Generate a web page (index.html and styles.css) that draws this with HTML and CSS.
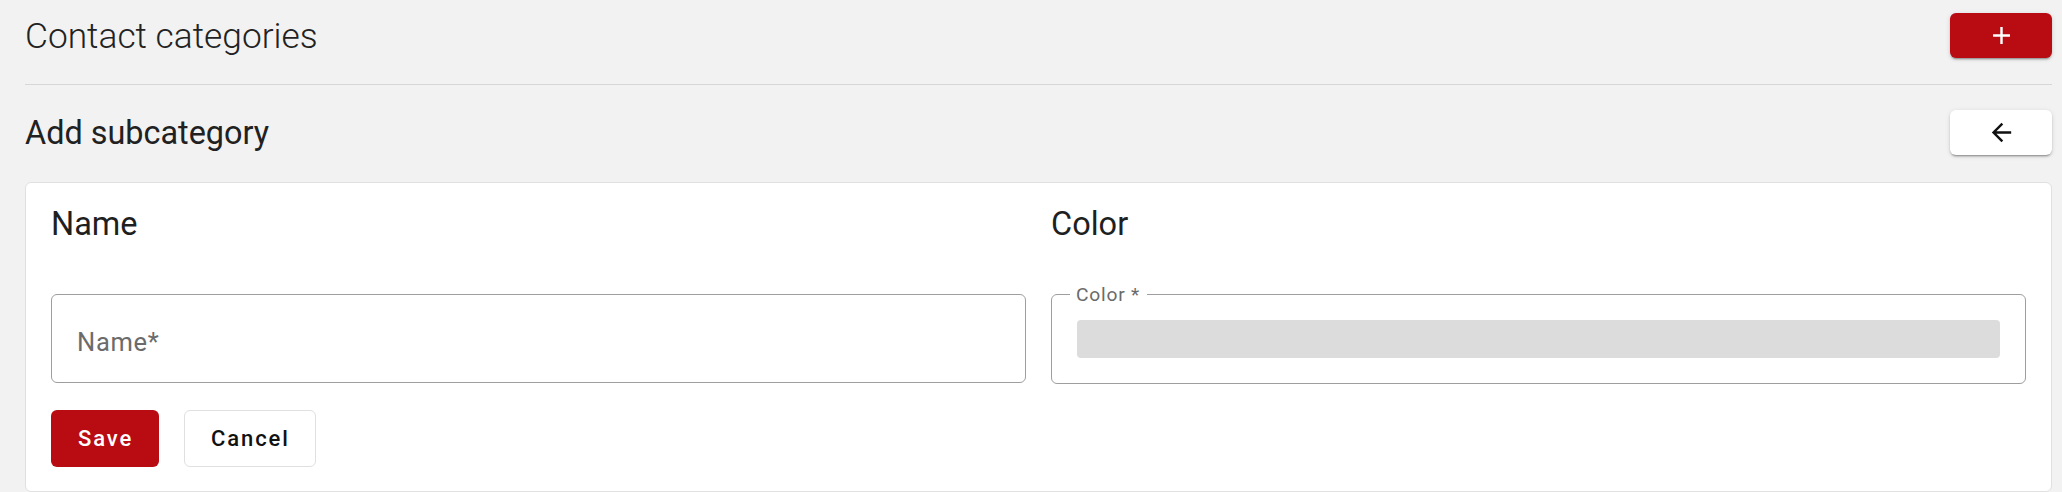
FILE: index.html
```html
<!DOCTYPE html>
<html lang="en">
<head>
<meta charset="utf-8">
<title>Contact categories</title>
<link rel="stylesheet" href="styles.css">
</head>
<body>
<div class="page">
  <header class="page-head">
    <h1 class="page-title">Contact categories</h1>
    <button class="btn-raised btn-red" type="button" aria-label="Add">
      <svg class="icon" viewBox="0 0 24 24" width="29" height="29"><path fill="#fff" d="M19 13h-6v6h-2v-6H5v-2h6V5h2v6h6v2z"/></svg>
    </button>
  </header>
  <div class="sub-head">
    <h2 class="sub-title">Add subcategory</h2>
    <button class="btn-raised btn-white" type="button" aria-label="Back">
      <svg class="icon" viewBox="0 0 24 24" width="29" height="29"><path fill="#111" d="M20 11H7.83l5.59-5.59L12 4l-8 8 8 8 1.41-1.41L7.83 13H20v-2z"/></svg>
    </button>
  </div>
  <section class="card">
    <div class="fields">
      <div class="col">
        <h3 class="field-title">Name</h3>
        <input class="text-input" type="text" placeholder="Name*">
      </div>
      <div class="col">
        <h3 class="field-title">Color</h3>
        <fieldset class="outline">
          <legend class="outline-label">Color *</legend>
          <div class="color-bar"></div>
        </fieldset>
      </div>
    </div>
    <div class="actions">
      <button class="btn btn-save" type="button">Save</button>
      <button class="btn btn-cancel" type="button">Cancel</button>
    </div>
  </section>
</div>
</body>
</html>
```

FILE: styles.css
```css
* { box-sizing: border-box; }

html, body {
  margin: 0;
  padding: 0;
  background: #f2f2f2;
  font-family: Roboto, "Liberation Sans", Arial, sans-serif;
  color: #212121;
}

.page {
  padding: 0 10px 0 25px;
}

.page-head {
  display: flex;
  align-items: center;
  justify-content: space-between;
  padding: 13px 0 26px;
  border-bottom: 1px solid #d7d7d7;
}

.page-title {
  margin: 0;
  font-size: 35.3px;
  font-weight: 300;
  line-height: 40px;
  color: #222;
}

.sub-head {
  display: flex;
  align-items: center;
  justify-content: space-between;
  padding: 25px 0 27px;
}

.sub-title {
  margin: 0;
  font-size: 32.4px;
  font-weight: 400;
  line-height: 40px;
  color: #212121;
}

.btn-raised {
  width: 102px;
  height: 45px;
  border: 0;
  border-radius: 6px;
  display: flex;
  align-items: center;
  justify-content: center;
  padding: 0;
  box-shadow: 0 3px 1px -2px rgba(0,0,0,.2), 0 2px 2px 0 rgba(0,0,0,.14), 0 1px 5px 0 rgba(0,0,0,.12);
}

.btn-red { background: #b80b12; }
.btn-white { background: #fff; }

.icon { display: block; }

.card {
  background: #fff;
  border: 1px solid #e0e0e0;
  border-radius: 6px;
  padding: 23px 25px 24px;
}

.fields {
  display: grid;
  grid-template-columns: 1fr 1fr;
  column-gap: 25px;
}

.col {
  display: flex;
  flex-direction: column;
  min-width: 0;
}

.field-title {
  margin: 0;
  font-size: 32.5px;
  font-weight: 400;
  line-height: 37px;
  color: #1f1f1f;
}

.text-input {
  margin-top: 51px;
  height: 89px;
  width: 100%;
  border: 1px solid #9e9e9e;
  border-radius: 6px;
  padding: 6px 25px 0;
  font-family: Roboto, "Liberation Sans", Arial, sans-serif;
  font-size: 25.5px;
  letter-spacing: 0.7px;
  color: #222;
  background: #fff;
  outline: none;
}

.text-input::placeholder {
  color: #6b6b6b;
}

.outline {
  margin: 41px 0 0;
  min-width: 0;
  border: 1px solid #9e9e9e;
  border-radius: 6px;
  padding: 16px 25px 25px;
}

.outline-label {
  margin-left: -7px;
  padding: 2px 7px 0 6px;
  font-size: 19.2px;
  line-height: 18px;
  letter-spacing: 0.8px;
  color: #6b6b6b;
}

.color-bar {
  height: 38px;
  background: #dcdcdc;
  border-radius: 4px;
}

.actions {
  display: flex;
  gap: 25px;
  margin-top: 26px;
}

.btn {
  height: 57px;
  border-radius: 6px;
  padding: 0 25px 0 26px;
  font-family: Roboto, "Liberation Sans", Arial, sans-serif;
  font-size: 22px;
  font-weight: 500;
  letter-spacing: 1.9px;
}

.btn-save {
  min-width: 108px;
  background: #b80b12;
  color: #fff;
  border: 0;
}

.btn-cancel {
  background: #fff;
  color: #111;
  border: 1px solid #e0e0e0;
}
```
